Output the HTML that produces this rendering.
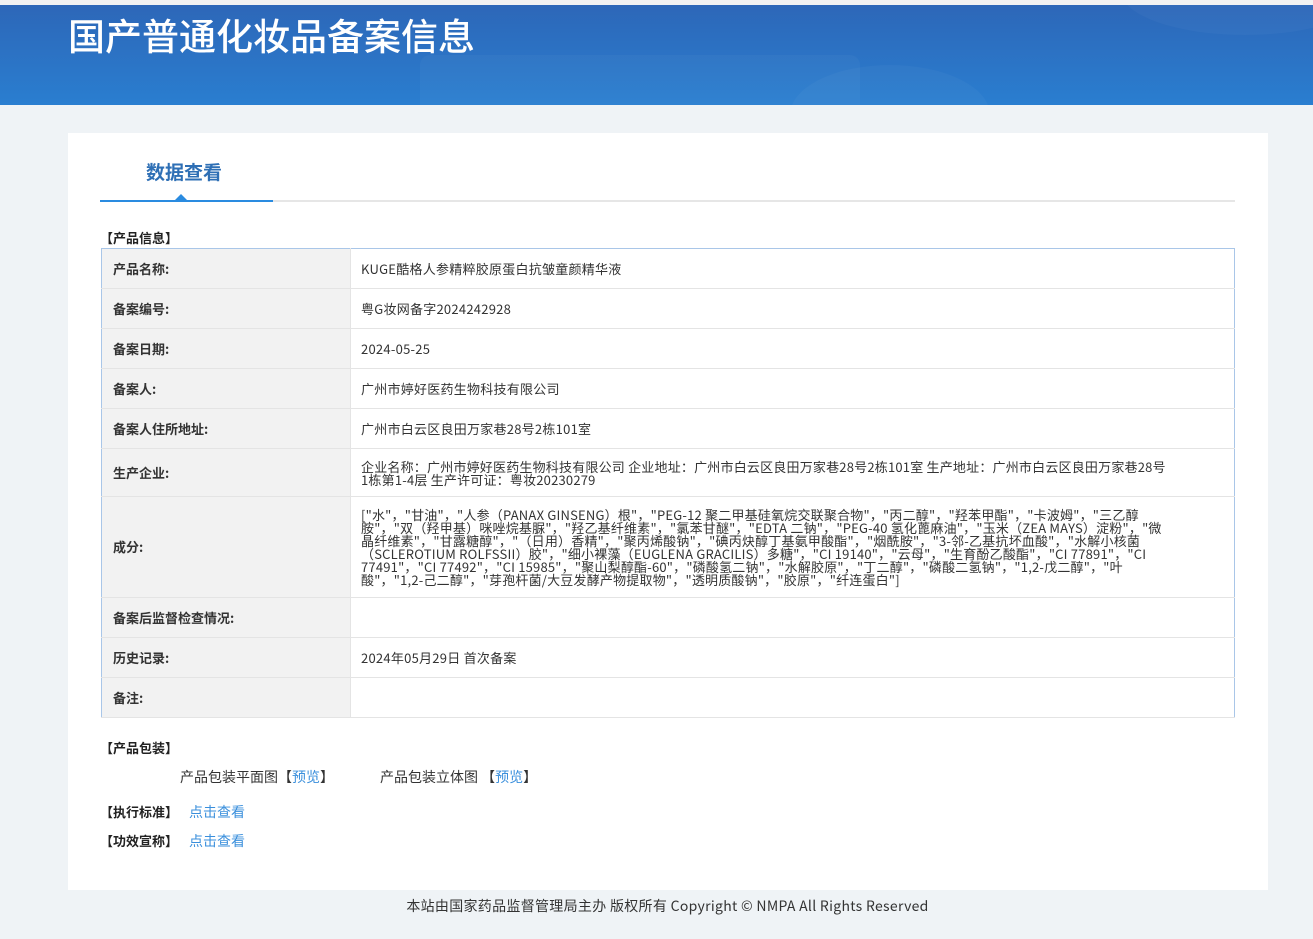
<!DOCTYPE html>
<html><head><meta charset="utf-8"><style>
*{margin:0;padding:0;box-sizing:border-box}
body{width:1313px;height:939px;background:#eff3f6;font-family:"Noto Sans CJK SC","Liberation Sans",sans-serif;color:#333;font-size:13px;position:relative;overflow:hidden}
.top{position:absolute;left:0;top:0;width:1313px;height:5px;background:#f2f2f2}
.hdr{position:absolute;left:0;top:5px;width:1313px;height:100px;background:linear-gradient(180deg,#2d67b8,#2a7ed0);overflow:hidden}
.hdr h1{position:absolute;left:68px;top:2px;color:#fff;font-size:37px;font-weight:500;font-family:"Noto Sans CJK SC",sans-serif;line-height:54px}
.blob{position:absolute;border-radius:50%;background:rgba(255,255,255,0.03)}
.card{position:absolute;left:68px;top:133px;width:1200px;height:757px;background:#fff}
.tab{position:absolute;left:78px;top:25px;font-size:19px;font-weight:bold;color:#2e6fb5;line-height:28px}
.tline{position:absolute;left:32px;top:67px;width:1135px;height:2px;background:#e6e6e6}
.tact{position:absolute;left:32px;top:67px;width:173px;height:2px;background:#2a8be0}
.tri{position:absolute;left:107px;top:61px;width:0;height:0;border-left:6px solid transparent;border-right:6px solid transparent;border-bottom:6px solid #2a8be0}
.sec{position:absolute;font-weight:bold;color:#222;font-size:13px;line-height:16px}
table{position:absolute;left:33px;top:115px;width:1134px;border-collapse:collapse;border:1px solid #a9c6e8}
td{border-bottom:1px solid #e4e4e4;height:40px;vertical-align:middle;line-height:16px}
td.l{width:249px;background:#f2f2f2;font-weight:bold;padding-left:11px;color:#333;border-right:1px solid #e4e4e4}
td.v{padding-left:10px;color:#333;letter-spacing:0.25px}
td.ml{line-height:13px;letter-spacing:0.2px}
a{color:#3a8fdc;text-decoration:none}
.p14{position:absolute;font-size:14px;line-height:18px}
.foot{position:absolute;top:896px;left:0;width:1335px;text-align:center;font-size:14px;color:#333;line-height:20px;letter-spacing:0.3px}
</style></head><body>
<div class="top"></div>
<div class="hdr">
<div class="blob" style="left:420px;top:50px;width:440px;height:120px;border-radius:10px"></div>
<div class="blob" style="left:790px;top:60px;width:200px;height:100px"></div>
<div class="blob" style="left:1120px;top:-60px;width:250px;height:90px"></div>
<h1>国产普通化妆品备案信息</h1></div>
<div class="card">
<div class="tab">数据查看</div>
<div class="tline"></div><div class="tact"></div><div class="tri"></div>
<div class="sec" style="left:32px;top:97px">【产品信息】</div>
<table>
<tr><td class="l">产品名称:</td><td class="v">KUGE酷格人参精粹胶原蛋白抗皱童颜精华液</td></tr>
<tr><td class="l">备案编号:</td><td class="v">粤G妆网备字2024242928</td></tr>
<tr><td class="l">备案日期:</td><td class="v">2024-05-25</td></tr>
<tr><td class="l">备案人:</td><td class="v">广州市婷好医药生物科技有限公司</td></tr>
<tr><td class="l">备案人住所地址:</td><td class="v">广州市白云区良田万家巷28号2栋101室</td></tr>
<tr><td class="l" style="height:48px">生产企业:</td><td class="v ml">企业名称：广州市婷好医药生物科技有限公司 企业地址：广州市白云区良田万家巷28号2栋101室 生产地址：广州市白云区良田万家巷28号<br>1栋第1-4层 生产许可证：粤妆20230279</td></tr>
<tr><td class="l" style="height:101px">成分:</td><td class="v ml">["水"，"甘油"，"人参（PANAX GINSENG）根"，"PEG-12 聚二甲基硅氧烷交联聚合物"，"丙二醇"，"羟苯甲酯"，"卡波姆"，"三乙醇<br>胺"，"双（羟甲基）咪唑烷基脲"，"羟乙基纤维素"，"氯苯甘醚"，"EDTA 二钠"，"PEG-40 氢化蓖麻油"，"玉米（ZEA MAYS）淀粉"，"微<br>晶纤维素"，"甘露糖醇"，"（日用）香精"，"聚丙烯酸钠"，"碘丙炔醇丁基氨甲酸酯"，"烟酰胺"，"3-邻-乙基抗坏血酸"，"水解小核菌<br>（SCLEROTIUM ROLFSSII）胶"，"细小裸藻（EUGLENA GRACILIS）多糖"，"CI 19140"，"云母"，"生育酚乙酸酯"，"CI 77891"，"CI<br>77491"，"CI 77492"，"CI 15985"，"聚山梨醇酯-60"，"磷酸氢二钠"，"水解胶原"，"丁二醇"，"磷酸二氢钠"，"1,2-戊二醇"，"叶<br>酸"，"1,2-己二醇"，"芽孢杆菌/大豆发酵产物提取物"，"透明质酸钠"，"胶原"，"纤连蛋白"]</td></tr>
<tr><td class="l">备案后监督检查情况:</td><td class="v"></td></tr>
<tr><td class="l">历史记录:</td><td class="v">2024年05月29日 首次备案</td></tr>
<tr><td class="l">备注:</td><td class="v"></td></tr>
</table>
<div class="sec" style="left:32px;top:607px">【产品包装】</div>
<div class="p14" style="left:112px;top:635px">产品包装平面图【<a>预览</a>】</div>
<div class="p14" style="left:312px;top:635px">产品包装立体图 【<a>预览</a>】</div>
<div class="sec" style="left:32px;top:671px">【执行标准】</div><a class="p14" style="left:121px;top:670px">点击查看</a>
<div class="sec" style="left:32px;top:700px">【功效宣称】</div><a class="p14" style="left:121px;top:699px">点击查看</a>
</div>
<div class="foot">本站由国家药品监督管理局主办 版权所有 Copyright © NMPA All Rights Reserved</div>
</body></html>
